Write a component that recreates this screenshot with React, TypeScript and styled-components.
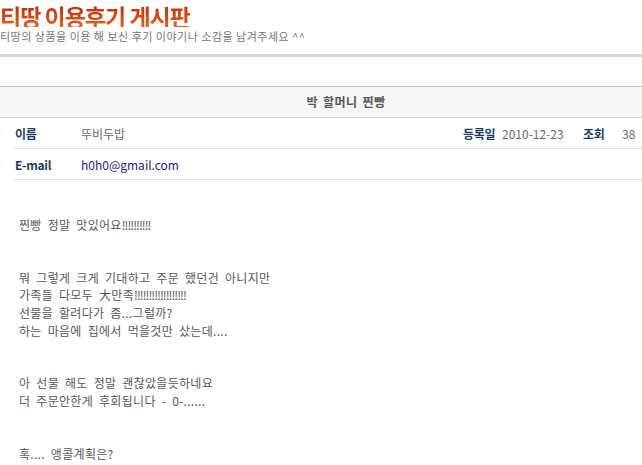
import React from 'react'
import styled, { createGlobalStyle } from 'styled-components'

const GlobalStyle = createGlobalStyle`
  html, body {
    margin: 0;
    padding: 0;
    background: #ffffff;
    overflow: hidden;
  }
  body {
    font-family: "Noto Sans CJK KR", "Noto Sans", sans-serif;
    font-size: 12px;
  }
`

interface iinfo {
  label: string
  value: string
  isMail?: boolean
}

const post = {
  title: '박 할머니 찐빵',
  name: '뚜비두밥',
  email: 'h0h0@gmail.com',
  date: '2010-12-23',
  hit: '38',
  lines: [
    '찐빵 정말 맛있어요!!!!!!!!!!',
    '',
    '',
    '뭐 그렇게 크게 기대하고 주문 했던건 아니지만',
    '가족들 다모두 大만족!!!!!!!!!!!!!!!!!!',
    '선물을 할려다가 좀...그럴까?',
    '하는 마음에 집에서 먹을것만 샀는데....',
    '',
    '',
    '아 선물 해도 정말 괜찮았을듯하네요',
    '더 주문안한게 후회됩니다 - 0-......',
    '',
    '',
    '혹.... 앵콜계획은?',
  ],
}

// runs of "!" are drawn tighter, like the old bitmap font
const renderLine = (line: string) =>
  line.split(/(!+)/).map((part, i) =>
    part.startsWith('!') ? <Bang key={i}>{part}</Bang> : <React.Fragment key={i}>{part}</React.Fragment>
  )

const App = () => {
  const mailRow: iinfo = { label: 'E-mail', value: post.email, isMail: true }

  return (
    <Page>
      <GlobalStyle />
      <Head>
        <Title>티땅 이용후기 게시판</Title>
        <Sub>티땅의 상품을 이용 해 보신 후기 이야기나 소감을 남겨주세요 ^^</Sub>
      </Head>
      <Bar />

      <Board>
        <Subject>{post.title}</Subject>
        <Rows>
          <Row>
            <Label>이름</Label>
            <Value>{post.name}</Value>
            <Label width={39}>등록일</Label>
            <Value width={81}>{post.date}</Value>
            <Label width={39}>조회</Label>
            <Value width={70}>{post.hit}</Value>
          </Row>
          <Row>
            <Label>{mailRow.label}</Label>
            <Value mail={mailRow.isMail}>{mailRow.value}</Value>
          </Row>
        </Rows>

        <Content>
          {post.lines.map((line, i) => (
            <Line key={i}>{line ? renderLine(line) : '\u00a0'}</Line>
          ))}
        </Content>
      </Board>
    </Page>
  )
}

export default App

const Page = styled.div`
  width: 692px;
`

const Head = styled.div`
  padding-top: 5px;
  height: 49px;
`

const Title = styled.h1`
  margin: 0;
  font-size: 23px;
  line-height: 22px;
  font-weight: bold;
  letter-spacing: -1px;
  background: linear-gradient(#c42c08, #e4601c);
  -webkit-background-clip: text;
  background-clip: text;
  color: transparent;
  width: fit-content;
`

const Sub = styled.div`
  margin-top: 3px;
  font-size: 11px;
  line-height: 12px;
  color: #777777;
  letter-spacing: 0.5px;
`

const Bar = styled.div`
  height: 3px;
  background: #d4d4d4;
`

const Board = styled.div`
  margin-top: 29px;
`

const Subject = styled.div`
  height: 30px;
  line-height: 30px;
  border-top: 1px solid #c8c8c8;
  border-bottom: 1px solid #d4d4d4;
  background: #f6f6f6;
  text-align: center;
  font-size: 12px;
  font-weight: bold;
  color: #555555;
  letter-spacing: 0.4px;
  word-spacing: 2px;
`

const Rows = styled.div`
  margin-left: 14px;
`

const Row = styled.div`
  display: flex;
  align-items: center;
  height: 30px;
  border-bottom: 1px solid #e4e4e4;
`

const Label = styled.div<{ width?: number }>`
  width: ${(p) => (p.width ? `${p.width}px` : '66px')};
  padding-left: ${(p) => (p.width ? '0' : '1px')};
  flex-shrink: 0;
  font-size: 12px;
  font-weight: bold;
  color: #1e3d5c;
  letter-spacing: -0.3px;
`

const Value = styled.div<{ width?: number; mail?: boolean }>`
  ${(p) => (p.width ? `width: ${p.width}px; flex-shrink: 0;` : 'flex: 1;')}
  font-size: 12px;
  color: ${(p) => (p.mail ? '#1c1c8c' : '#6a6a6a')};
`

const Content = styled.div`
  padding: 36px 0 0 19px;
`

const Line = styled.div`
  font-size: 12px;
  line-height: 17.6px;
  color: #585858;
  white-space: pre;
  letter-spacing: 0.3px;
  word-spacing: 3px;
`

const Bang = styled.span`
  letter-spacing: -1px;
`
